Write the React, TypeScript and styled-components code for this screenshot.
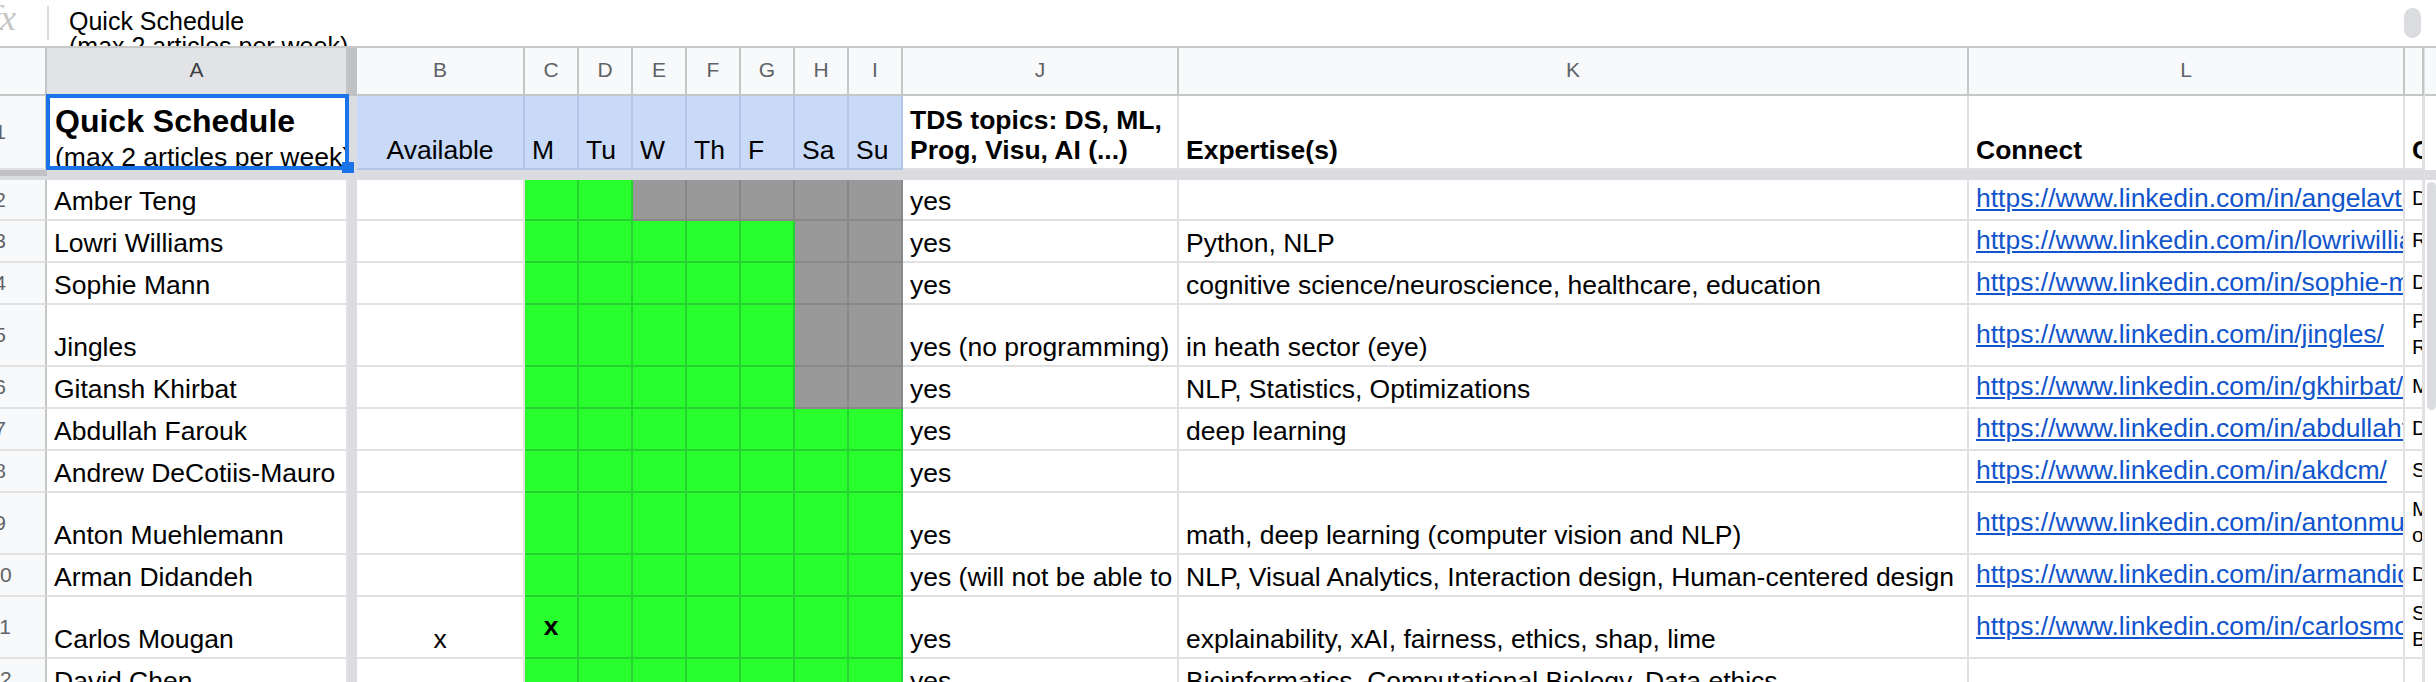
import React from 'react';
import styled, { createGlobalStyle } from 'styled-components';

const COLS = '47px 301px 9px 168px repeat(7, 54px) 276px 790px 436px 19px';

type Day = 'G' | 'X';

interface Person {
  n: number;
  name: string;
  h: number;
  avail?: string;
  days: string;
  mark?: number;
  topics: string;
  expertise: string;
  link: string;
  note: string[];
}

const people: Person[] = [
  { n: 2, name: 'Amber Teng', h: 41, days: 'GGXXXXX', topics: 'yes', expertise: '', link: 'https://www.linkedin.com/in/angelavteng/', note: ['Data Scientist'] },
  { n: 3, name: 'Lowri Williams', h: 42, days: 'GGGGGXX', topics: 'yes', expertise: 'Python, NLP', link: 'https://www.linkedin.com/in/lowriwilliams/', note: ['Research Associate'] },
  { n: 4, name: 'Sophie Mann', h: 42, days: 'GGGGGXX', topics: 'yes', expertise: 'cognitive science/neuroscience, healthcare, education', link: 'https://www.linkedin.com/in/sophie-mann/', note: ['Data Scientist'] },
  { n: 5, name: 'Jingles', h: 62, days: 'GGGGGXX', topics: 'yes (no programming)', expertise: 'in heath sector (eye)', link: 'https://www.linkedin.com/in/jingles/', note: ['PhD student', 'Researcher'] },
  { n: 6, name: 'Gitansh Khirbat', h: 42, days: 'GGGGGXX', topics: 'yes', expertise: 'NLP, Statistics, Optimizations', link: 'https://www.linkedin.com/in/gkhirbat/', note: ['Machine Learning'] },
  { n: 7, name: 'Abdullah Farouk', h: 42, days: 'GGGGGGG', topics: 'yes', expertise: 'deep learning', link: 'https://www.linkedin.com/in/abdullahfarouk/', note: ['Data Scientist'] },
  { n: 8, name: 'Andrew DeCotiis-Mauro', h: 42, days: 'GGGGGGG', topics: 'yes', expertise: '', link: 'https://www.linkedin.com/in/akdcm/', note: ['Software Engineer'] },
  { n: 9, name: 'Anton Muehlemann', h: 62, days: 'GGGGGGG', topics: 'yes', expertise: 'math, deep learning (computer vision and NLP)', link: 'https://www.linkedin.com/in/antonmuehlemann/', note: ['Mathematician', 'of Oxford'] },
  { n: 10, name: 'Arman Didandeh', h: 42, days: 'GGGGGGG', topics: 'yes (will not be able to commit every week)', expertise: 'NLP, Visual Analytics, Interaction design, Human-centered design', link: 'https://www.linkedin.com/in/armandidandeh/', note: ['Data Scientist'] },
  { n: 11, name: 'Carlos Mougan', h: 62, avail: 'x', days: 'GGGGGGG', mark: 0, topics: 'yes', expertise: 'explainability, xAI, fairness, ethics, shap, lime', link: 'https://www.linkedin.com/in/carlosmougan/', note: ['Student', 'Barcelona'] },
  { n: 12, name: 'David Chen', h: 42, days: 'GGGGGGG', topics: 'yes', expertise: 'Bioinformatics, Computational Biology, Data ethics', link: '', note: [] },
];

const dayColors: Record<Day, { bg: string; line: string }> = {
  G: { bg: '#2aff2e', line: '#25d22f' },
  X: { bg: '#999999', line: '#888888' },
};

const letters = ['B', 'C', 'D', 'E', 'F', 'G', 'H', 'I', 'J', 'K', 'L', ''];
const dayNames = ['M', 'Tu', 'W', 'Th', 'F', 'Sa', 'Su'];

const GlobalStyle = createGlobalStyle`
  * { box-sizing: border-box; }
  html, body { margin: 0; padding: 0; background: #fff; overflow: hidden; }
  body { font-family: 'Liberation Sans', Arial, Helvetica, sans-serif; color: #000; }
`;

const Page = styled.div`
  width: 2436px;
  height: 682px;
  overflow: hidden;
  display: flex;
  flex-direction: column;
  background: #fff;
`;

const FormulaBar = styled.div`
  flex: 0 0 48px;
  height: 48px;
  display: flex;
  border-bottom: 2px solid #c7c7c7;
  overflow: hidden;
`;

const FxBox = styled.div`
  width: 47px;
  overflow: hidden;
  display: flex;
`;

const FxGlyph = styled.span`
  font-family: 'Liberation Serif', 'DejaVu Serif', serif;
  font-style: italic;
  font-size: 36px;
  line-height: 36px;
  color: #c4c4c4;
  margin-left: -10px;
`;

const BarSeparator = styled.div`
  width: 2px;
  height: 34px;
  margin-top: 6px;
  background: #dadce0;
`;

const FormulaText = styled.div`
  padding: 9px 0 0 20px;
  font-size: 25px;
  line-height: 25px;
  white-space: nowrap;
`;

const Spacer = styled.div`
  flex: 1;
`;

const FormulaPill = styled.div`
  width: 17px;
  height: 30px;
  margin: 8px 15px 0 0;
  border-radius: 9px;
  background: #dadce0;
`;

const Sheet = styled.div`
  flex: 1;
  display: flex;
  overflow: hidden;
`;

const Grid = styled.div`
  width: 2424px;
  flex: 0 0 2424px;
  display: flex;
  flex-direction: column;
`;

const HeaderRow = styled.div`
  display: grid;
  grid-template-columns: ${COLS};
  height: 48px;
  flex: 0 0 48px;
`;

const Corner = styled.div`
  background: #f8f9fa;
  border-right: 2px solid #c4c7c5;
  border-bottom: 2px solid #c4c7c5;
`;

const ColHead = styled.div<{ $selected?: boolean }>`
  display: flex;
  align-items: center;
  justify-content: center;
  background: ${(p) => (p.$selected ? '#e1e3e6' : '#f8f9fa')};
  color: ${(p) => (p.$selected ? '#3c4043' : '#5f6368')};
  border-right: 2px solid #c4c7c5;
  border-bottom: 2px solid #c4c7c5;
  font-size: 21px;
  padding-bottom: 2px;
  overflow: hidden;
`;

const FreezeHandle = styled.div<{ $dark?: boolean }>`
  background: ${(p) => (p.$dark ? '#bfc1c4' : '#dadce0')};
`;

const DataRow = styled.div<{ $h: number }>`
  display: grid;
  grid-template-columns: ${COLS};
  height: ${(p) => p.$h}px;
  flex: 0 0 ${(p) => p.$h}px;
`;

const RowHead = styled.div`
  display: flex;
  align-items: center;
  overflow: hidden;
  background: #f8f9fa;
  border-right: 2px solid #c4c7c5;
  border-bottom: 2px solid #e1e1e1;
`;

const RowNum = styled.span`
  flex: 0 0 94px;
  margin-left: -47px;
  text-align: center;
  font-size: 21px;
  color: #5f6368;
`;

interface CellProps {
  $bg?: string;
  $line?: string;
  $align?: 'left' | 'center';
  $valign?: 'bottom' | 'middle';
  $bold?: boolean;
}

const Cell = styled.div<CellProps>`
  display: flex;
  align-items: ${(p) => (p.$valign === 'middle' ? 'center' : 'flex-end')};
  justify-content: ${(p) => (p.$align === 'center' ? 'center' : 'flex-start')};
  padding: 0 7px 3px;
  background: ${(p) => p.$bg || '#fff'};
  border-right: 2px solid ${(p) => p.$line || '#e1e1e1'};
  border-bottom: 2px solid ${(p) => p.$line || '#e1e1e1'};
  overflow: hidden;
  white-space: nowrap;
  font-size: 26.5px;
  line-height: 30px;
  font-weight: ${(p) => (p.$bold ? 700 : 400)};
`;

const NoteCell = styled.div`
  display: flex;
  flex-direction: column;
  justify-content: center;
  padding: 0 0 3px 7px;
  border-right: 2px solid #e1e1e1;
  border-bottom: 2px solid #e1e1e1;
  overflow: hidden;
  white-space: nowrap;
  font-size: 21px;
  line-height: 26px;
`;

const TitleCell = styled.div`
  position: relative;
  background: #fff;
`;

const TitleClip = styled.div`
  height: 100%;
  overflow: hidden;
  display: flex;
  flex-direction: column;
  justify-content: flex-end;
  padding-left: 8px;
  white-space: nowrap;
`;

const TitleBlock = styled.div`
  margin-bottom: -2px;
`;

const TitleMain = styled.div`
  font-size: 32px;
  line-height: 42px;
  font-weight: 700;
`;

const TitleSub = styled.div`
  font-size: 26.5px;
  line-height: 30px;
`;

const Selection = styled.div`
  position: absolute;
  top: -2px;
  left: -1px;
  right: -1px;
  bottom: 0;
  border: 4px solid #1a73e8;
  pointer-events: none;
`;

const FillHandle = styled.div`
  position: absolute;
  width: 12px;
  height: 11px;
  right: -6px;
  bottom: -3px;
  background: #1a73e8;
`;

const FreezeBand = styled.div`
  display: flex;
  height: 10px;
  flex: 0 0 10px;
`;

const FreezeBandHead = styled.div`
  width: 47px;
  background: linear-gradient(#bfc1c4 0 6px, #dadce0 6px);
`;

const FreezeBandRest = styled.div`
  flex: 1;
  background: #dadce0;
`;

const Link = styled.span`
  color: #1155cc;
  text-decoration: underline;
  text-underline-offset: 2px;
`;

const ScrollTrack = styled.div`
  flex: 1;
  display: flex;
  flex-direction: column;
  border-left: 1px solid #e0e0e0;
`;

const ScrollHead = styled.div`
  height: 48px;
  flex: 0 0 48px;
  background: #f8f9fa;
  border-bottom: 2px solid #c4c7c5;
`;

const ScrollGap = styled.div<{ $h: number; $bg?: string }>`
  height: ${(p) => p.$h}px;
  flex: 0 0 ${(p) => p.$h}px;
  background: ${(p) => p.$bg || '#fff'};
`;

const ScrollThumb = styled.div`
  width: 9px;
  height: 228px;
  margin: 2px 0 0 2px;
  border-radius: 5px;
  background: #dadce0;
`;

const BLUE = '#c9daf8';
const BLUE_LINE = '#b3c6e8';

const PersonRow: React.FC<{ p: Person }> = ({ p }) => (
  <DataRow $h={p.h}>
    <RowHead>
      <RowNum>{p.n}</RowNum>
    </RowHead>
    <Cell>{p.name}</Cell>
    <FreezeHandle />
    <Cell $align='center'>{p.avail}</Cell>
    {p.days.split('').map((d, i) => {
      const c = dayColors[d as Day];
      return (
        <Cell
          key={i}
          $bg={c.bg}
          $line={c.line}
          $align='center'
          $valign='middle'
          $bold
        >
          {p.mark === i ? 'x' : ''}
        </Cell>
      );
    })}
    <Cell>{p.topics}</Cell>
    <Cell>{p.expertise}</Cell>
    <Cell $valign='middle'>{p.link && <Link>{p.link}</Link>}</Cell>
    <NoteCell>
      {p.note.map((line) => (
        <div key={line}>{line}</div>
      ))}
    </NoteCell>
  </DataRow>
);

const App = () => (
  <Page>
    <GlobalStyle />
    <FormulaBar>
      <FxBox>
        <FxGlyph>fx</FxGlyph>
      </FxBox>
      <BarSeparator />
      <FormulaText>
        Quick Schedule
        <br />
        (max 2 articles per week)
      </FormulaText>
      <Spacer />
      <FormulaPill />
    </FormulaBar>
    <Sheet>
      <Grid>
        <HeaderRow>
          <Corner />
          <ColHead $selected>A</ColHead>
          <FreezeHandle $dark />
          {letters.map((l, i) => (
            <ColHead key={i}>{l}</ColHead>
          ))}
        </HeaderRow>
        <DataRow $h={74}>
          <RowHead>
            <RowNum>1</RowNum>
          </RowHead>
          <TitleCell>
            <TitleClip>
              <TitleBlock>
                <TitleMain>Quick Schedule</TitleMain>
                <TitleSub>(max 2 articles per week)</TitleSub>
              </TitleBlock>
            </TitleClip>
            <Selection />
            <FillHandle />
          </TitleCell>
          <FreezeHandle />
          <Cell $bg={BLUE} $line={BLUE_LINE} $align='center'>
            Available
          </Cell>
          {dayNames.map((d) => (
            <Cell key={d} $bg={BLUE} $line={BLUE_LINE}>
              {d}
            </Cell>
          ))}
          <Cell $bold>
            <div>
              TDS topics: DS, ML,
              <br />
              Prog, Visu, AI (...)
            </div>
          </Cell>
          <Cell $bold>Expertise(s)</Cell>
          <Cell $bold>Connect</Cell>
          <Cell $bold>Current position</Cell>
        </DataRow>
        <FreezeBand>
          <FreezeBandHead />
          <FreezeBandRest />
        </FreezeBand>
        {people.map((p) => (
          <PersonRow key={p.n} p={p} />
        ))}
      </Grid>
      <ScrollTrack>
        <ScrollHead />
        <ScrollGap $h={74} />
        <ScrollGap $h={10} $bg='#dadce0' />
        <ScrollThumb />
      </ScrollTrack>
    </Sheet>
  </Page>
);

export default App;
